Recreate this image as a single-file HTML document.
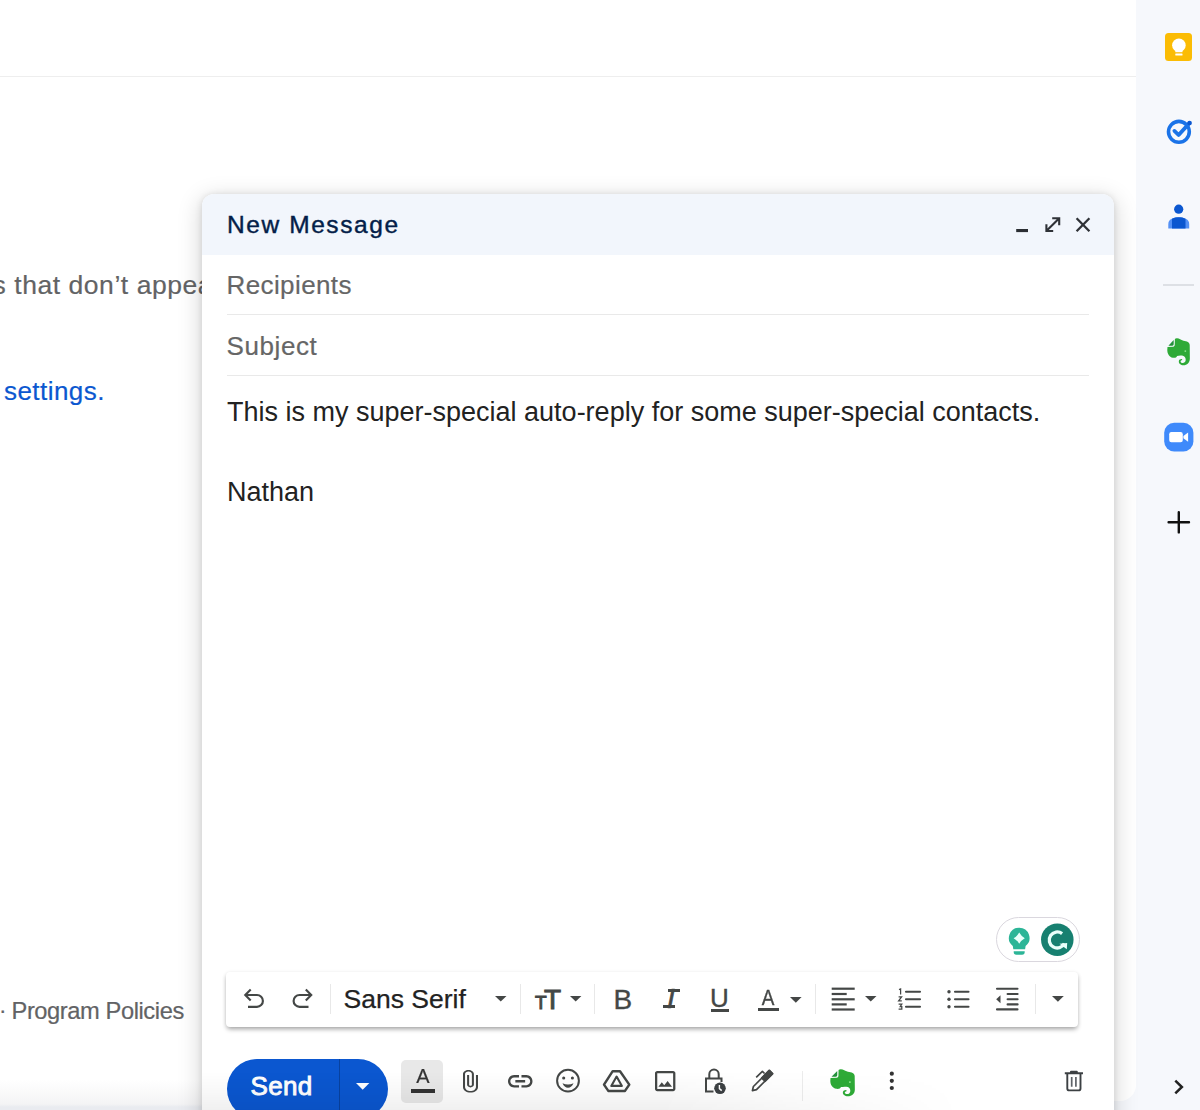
<!DOCTYPE html>
<html><head><meta charset="utf-8">
<title>New Message</title>
<style>
*{box-sizing:border-box;margin:0;padding:0}
html,body{width:1200px;height:1110px;overflow:hidden;background:#f6f8fc;font-family:"Liberation Sans",sans-serif;}
.abs{position:absolute}
svg{display:block;overflow:visible}
#main{left:0;top:0;width:1136px;height:1110px;background:linear-gradient(#fff 0,#fff 1080px,#f4f4f5 1104px,#e9ebf0 1107px,#e9ebf0 1110px)}
#main2{left:1100px;top:0;width:36px;height:1101px;background:#fff;border-radius:0 0 16px 0}
#main3{left:1100px;top:1080px;width:36px;height:30px;background:#f6f8fc}
#topline{left:0;top:75.600px;width:1136px;height:1.500px;background:#eee}
.bgt{-webkit-text-stroke:.2px;color:#626365;font-size:26px;line-height:30px;white-space:nowrap}
#compose{left:202px;top:194px;width:911.500px;height:930px;background:#fff;border-radius:12px 12px 0 0;box-shadow:0 6px 22px 4px rgba(0,0,0,.13),0 1px 7px rgba(0,0,0,.13);overflow:hidden}
#chead{left:0;top:0;width:912px;height:61px;background:#f2f6fc}
#title{left:227px;top:209.700px;font-size:24.5px;line-height:30px;font-weight:normal;-webkit-text-stroke:.42px #041e49;color:#041e49;white-space:nowrap;letter-spacing:1.580px}
.fld{left:226.500px;font-size:26px;line-height:30px;color:#666;-webkit-text-stroke:.2px #666;white-space:nowrap}
.hr{left:227px;width:862px;height:1px;background:#e9e9e9}
.body{left:227px;font-size:27px;line-height:32px;color:#222;white-space:nowrap}
#fmt{left:226px;top:972px;width:852px;height:55px;background:#fff;border-radius:4px;box-shadow:0 3px 5px -1px rgba(0,0,0,.32),0 1px 4px rgba(0,0,0,.1)}
.sep{width:1px;background:#e8e8e8;top:984px;height:30px}
#fontname{left:343.500px;top:983.800px;font-size:26.500px;line-height:30px;color:#222;white-space:nowrap;letter-spacing:0;-webkit-text-stroke:.25px #222}
#send{left:227px;top:1058.500px;width:161px;height:60px;border-radius:30px;background:#0b57d0}
#sendt{left:250.500px;top:1070.500px;color:#fff;font-size:26px;line-height:30px;font-weight:normal;-webkit-text-stroke:.9px #fff;letter-spacing:.3px}
#senddiv{left:339px;top:1059px;width:1px;height:60px;background:#0842a0}
#abtn{left:401px;top:1060px;width:42px;height:42.500px;border-radius:5px;background:#e8e8e8}
.tg{color:#444746;-webkit-text-stroke:.35px #444746;white-space:nowrap}
#gpill{left:996px;top:917px;width:84px;height:45px;border-radius:23px;background:#fff;border:1.500px solid #dad7de}
</style></head><body>
<div class="abs" id="main"></div>
<div class="abs" id="main3"></div>
<div class="abs" id="main2"></div>
<div class="abs" id="topline"></div>
<div class="abs bgt" style="left:-7.500px;top:270px;font-size:26.5px;letter-spacing:.55px">s that don’t appear</div>
<div class="abs bgt" style="left:4px;top:376px;color:#0b57d0;letter-spacing:.45px">settings.</div>
<div class="abs bgt" style="left:-1px;top:996px;font-size:22.5px">·</div><div class="abs bgt" style="left:11.500px;top:996px;font-size:23.700px;letter-spacing:-.42px">Program Policies</div>

<div class="abs" id="compose"><div class="abs" id="chead"></div></div>
<div class="abs" id="title">New Message</div>
<div class="abs fld" style="top:270px;letter-spacing:.4px">Recipients</div>
<div class="abs hr" style="top:314px"></div>
<div class="abs fld" style="top:331px;letter-spacing:.6px">Subject</div>
<div class="abs hr" style="top:375px"></div>
<div class="abs body" style="top:396px">This is my super-special auto-reply for some super-special contacts.</div>
<div class="abs body" style="top:476px">Nathan</div>

<div class="abs" id="gpill"></div>
<div class="abs" id="fmt"></div>
<div class="abs sep" style="left:330px"></div>
<div class="abs sep" style="left:520px"></div>
<div class="abs sep" style="left:594px"></div>
<div class="abs sep" style="left:815px"></div>
<div class="abs sep" style="left:1035px"></div>
<div class="abs" id="fontname">Sans Serif</div>

<div class="abs" id="send"></div>
<div class="abs" id="senddiv"></div>
<div class="abs" id="sendt">Send</div>
<svg class="abs" style="left:356.3px;top:1082.5px" width="13.4" height="6.7" viewBox="0 0 10 5" fill="#fff"><path d="M0 0h10L5 5z"/></svg>
<div class="abs" id="abtn"></div>
<div class="abs" style="left:802px;top:1071px;width:1px;height:30px;background:#ececec"></div>
<svg class="abs" style="left:495.00px;top:996.40px" width="11.50" height="5.60" viewBox="7.000 10.000 10.000 5.000" preserveAspectRatio="none" fill="#444746"><path d="M7 10l5 5 5-5z"/></svg>
<svg class="abs" style="left:570.30px;top:996.40px" width="11.40" height="5.60" viewBox="7.000 10.000 10.000 5.000" preserveAspectRatio="none" fill="#444746"><path d="M7 10l5 5 5-5z"/></svg>
<svg class="abs" style="left:790.20px;top:996.50px" width="11.60" height="5.70" viewBox="7.000 10.000 10.000 5.000" preserveAspectRatio="none" fill="#444746"><path d="M7 10l5 5 5-5z"/></svg>
<svg class="abs" style="left:864.50px;top:996.40px" width="11.50" height="5.60" viewBox="7.000 10.000 10.000 5.000" preserveAspectRatio="none" fill="#444746"><path d="M7 10l5 5 5-5z"/></svg>
<svg class="abs" style="left:1051.50px;top:996.40px" width="11.80" height="5.80" viewBox="7.000 10.000 10.000 5.000" preserveAspectRatio="none" fill="#444746"><path d="M7 10l5 5 5-5z"/></svg>
<svg class="abs" style="left:462.50px;top:1070.00px" width="15.00" height="22.50" viewBox="7.000 1.000 11.000 22.000" preserveAspectRatio="none" fill="#444746"><path d="M16.500 6v11.500c0 2.210-1.790 4-4 4s-4-1.790-4-4V5c0-1.380 1.120-2.500 2.500-2.500s2.500 1.120 2.500 2.500v10.500c0 .550-.450 1-1 1s-1-.450-1-1V6H10v9.500c0 1.380 1.120 2.500 2.500 2.500s2.500-1.120 2.500-2.500V5c0-2.210-1.790-4-4-4S7 2.790 7 5v12.500c0 3.040 2.460 5.500 5.500 5.500s5.500-2.460 5.500-5.500V6h-1.500z"/></svg>
<svg class="abs" style="left:507.50px;top:1075.00px" width="24.50" height="12.50" viewBox="2.000 7.000 20.000 10.000" preserveAspectRatio="none" fill="#444746"><path d="M3.900 12c0-1.710 1.390-3.100 3.100-3.100h4V7H7c-2.760 0-5 2.240-5 5s2.240 5 5 5h4v-1.900H7c-1.710 0-3.100-1.390-3.100-3.100zM8 13h8v-2H8v2zm9-6h-4v1.900h4c1.710 0 3.100 1.390 3.100 3.100s-1.390 3.100-3.100 3.100h-4V17h4c2.760 0 5-2.240 5-5s-2.240-5-5-5z"/></svg>
<svg class="abs" style="left:655.20px;top:1071.00px" width="20.40" height="20.20" viewBox="3.000 3.000 18.000 18.000" preserveAspectRatio="none" fill="#444746"><path d="M19 5v14H5V5h14m0-2H5c-1.100 0-2 .900-2 2v14c0 1.100.900 2 2 2h14c1.100 0 2-.900 2-2V5c0-1.100-.900-2-2-2zm-4.860 8.860l-3 3.870L9 13.140 6 17h12l-3.860-5.140z"/></svg>
<!-- header buttons -->
<svg class="abs" style="left:1010px;top:210px" width="90" height="30" viewBox="1010 210 90 30" fill="none" stroke="#2f3237" stroke-width="2.100">
<rect x="1016.2" y="229" width="11.8" height="3.1" fill="#2b2e33" stroke="none"/>
<path d="M1046.6 230.7L1059 218.4M1052.2 218.3h7v7M1046.4 224.2v6.8h6.8"/>
<path d="M1076.6 218.3l12.8 13M1089.4 218.3l-12.8 13" stroke-width="2.300" stroke="#2f3237"/>
</svg>
<!-- A button glyph -->
<div class="abs tg" id="g_A2" style="left:415.700px;top:1062.600px;font-size:21px;line-height:26px;transform:scaleX(.95);color:#333;-webkit-text-stroke:.2px #333">A</div>
<div class="abs" style="left:410.5px;top:1088.7px;width:24px;height:4.3px;background:#333"></div>
<!-- drive -->
<svg class="abs" style="left:600px;top:1066px" width="34" height="30" viewBox="600 1066 34 30" fill="none" stroke="#444746" stroke-width="2.450" stroke-linejoin="round">
<path d="M612.700 1071.200h7.300l9.300 13.400-4.300 6.300h-16.700l-4.300-6.300z"/>
<path d="M616.600 1076.600l5.300 9.300h-10.600z" stroke-width="2.100"/>
</svg>
<!-- lock clock -->
<svg class="abs" style="left:700px;top:1064px" width="32" height="34" viewBox="700 1064 32 34" fill="none" stroke="#444746" stroke-width="2">
<path d="M713.5 1091.500H706v-13h15.500v3.500"/>
<path d="M709.300 1078.500v-4.300a4.700 4.700 0 0 1 9.400 0v4.300"/>
<circle cx="720" cy="1088.300" r="5.800" fill="#3c4043" stroke="none"/>
<path d="M719.400 1085v3.600l2.300 2" stroke="#fff" stroke-width="1.400"/>
</svg>
<!-- pen -->
<svg class="abs" style="left:748px;top:1066px" width="30" height="30" viewBox="748 1066 30 30" fill="none" stroke="#444746" stroke-width="1.700" stroke-linejoin="round">
<path d="M752.400 1090.600l1-4.100 15.900-15.900 3.100 3.100-15.900 15.900z"/>
<path d="M762 1078l7.300-7.400 3.100 3.100-7.300 7.400z" fill="#444746" stroke-width="2.100"/>
<path d="M756.200 1077.400l6.200-6 2.200 2.100"/>
</svg>
<!-- more dots -->
<svg class="abs" style="left:886px;top:1068px" width="12" height="26" viewBox="886 1068 12 26" fill="#333"><circle cx="891.800" cy="1073.700" r="2.100"/><circle cx="891.800" cy="1080.800" r="2.100"/><circle cx="891.800" cy="1088" r="2.100"/></svg>
<!-- evernote bottom -->
<svg class="abs" style="left:830px;top:1068.700px" width="25" height="27.500" viewBox="368 253 324 384" preserveAspectRatio="none"><path fill="#2eaa37" d="M505 258C540 255 560 285 600 290C650 295 685 310 688 350L690 540C690 600 650 635 600 635C560 635 530 610 535 575C538 555 560 545 582 548L580 566C566 565 558 575 560 585C565 605 600 610 620 590C640 570 635 520 600 505C570 495 530 500 510 505C505 525 480 535 450 530C400 520 372 470 372 420L375 378L455 374C470 373 477 362 477 347L479 268C485 260 495 258 505 258Z"/><path fill="#23913a" d="M388 360L462 280L462 338C462 352 455 360 443 360Z"/><circle cx="626" cy="436" r="13" fill="#8fe38f"/></svg>
<!-- side panel -->

<!-- keep -->
<div class="abs" style="left:1164.500px;top:32.700px;width:27.800px;height:28.500px;border-radius:3.500px;background:#fbbc04"></div>
<svg class="abs" style="left:1164px;top:32px" width="30" height="30" viewBox="1164 32 30 30" fill="#fff"><circle cx="1178.900" cy="45.200" r="6.800"/><rect x="1175.300" y="49" width="7.200" height="3.200"/><rect x="1175.300" y="53.400" width="7.200" height="2.200" rx=".5"/></svg>
<!-- tasks -->
<svg class="abs" style="left:1162px;top:115px" width="34" height="34" viewBox="1162 115 34 34" fill="none" stroke="#1a73e8" stroke-linecap="round" stroke-linejoin="round">
<circle cx="1178.900" cy="131.800" r="10.400" stroke-width="3.600"/>
<path d="M1174.400 130.900l4.200 4.100 10.600-11.600" stroke-width="3.800"/>
<circle cx="1189.600" cy="123" r="2.300" fill="#0b57d0" stroke="none"/>
</svg>
<!-- contacts -->
<svg class="abs" style="left:1164px;top:200px" width="30" height="32" viewBox="1164 200 30 32">
<circle cx="1178.700" cy="209.200" r="4.600" fill="#0b57d0"/>
<path d="M1168.300 228.600V224C1168.300 219.500 1173 217.300 1178.700 217.300C1184.500 217.300 1189.200 219.500 1189.200 224V228.600Z" fill="#5491f5"/>
<path d="M1172 228.600V218.700Q1175 217.300 1178.700 217.300Q1182.500 217.300 1185.500 218.700V228.600Z" fill="#0b57d0"/>
</svg>
<div class="abs" style="left:1163px;top:284px;width:30.500px;height:1.500px;background:#dde0e5"></div>
<!-- evernote side -->
<svg class="abs" style="left:1166.700px;top:338.400px" width="23" height="27.400" viewBox="368 253 324 384" preserveAspectRatio="none"><path fill="#2eaa37" d="M505 258C540 255 560 285 600 290C650 295 685 310 688 350L690 540C690 600 650 635 600 635C560 635 530 610 535 575C538 555 560 545 582 548L580 566C566 565 558 575 560 585C565 605 600 610 620 590C640 570 635 520 600 505C570 495 530 500 510 505C505 525 480 535 450 530C400 520 372 470 372 420L375 378L455 374C470 373 477 362 477 347L479 268C485 260 495 258 505 258Z"/><path fill="#23913a" d="M388 360L462 280L462 338C462 352 455 360 443 360Z"/><circle cx="626" cy="436" r="13" fill="#8fe38f"/></svg>
<!-- zoom -->
<svg class="abs" style="left:1162px;top:420px" width="34" height="34" viewBox="1162 420 34 34">
<rect x="1164.200" y="422.700" width="29.200" height="28.800" rx="10" fill="#3f8afb"/>
<rect x="1169.200" y="432" width="13.600" height="10.200" rx="2.200" fill="#fff"/>
<path d="M1183.400 436l4.700-3.600v9.400l-4.700-3.600z" fill="#fff"/>
</svg>
<!-- plus -->
<svg class="abs" style="left:1164px;top:508px" width="30" height="30" viewBox="1164 508 30 30" stroke="#111" stroke-width="2.400" stroke-linecap="round"><path d="M1168.600 522.300h20.400M1178.800 512.200v20.200"/></svg>
<!-- chevron -->
<svg class="abs" style="left:1170px;top:1076px" width="18" height="22" viewBox="1170 1076 18 22" fill="none" stroke="#222" stroke-width="2.500"><path d="M1175.300 1080.600l6.600 6.400-6.600 6.400"/></svg>
<!-- grammarly -->
<svg class="abs" style="left:1000px;top:920px" width="80" height="40" viewBox="1000 920 80 40">
<path fill="#2cb597" d="M1019.200 927.700a10.200 10.200 0 0 1 6.400 18.200l-.5 3.300h-11.800l-.5-3.300a10.200 10.200 0 0 1 6.400-18.200z"/>
<path fill="#2cb597" d="M1013.700 951.200h11v.9a2.600 2.600 0 0 1-2.600 2.600h-5.800a2.600 2.600 0 0 1-2.600-2.600z"/>
<path fill="#e9fffa" d="M1019.200 932.600q2 3.600 5.600 5.600q-3.600 2-5.600 5.600q-2-3.600-5.600-5.600q3.600-2 5.600-5.600z"/>
<circle cx="1057.300" cy="939.700" r="16.250" fill="#178070"/>
<path d="M1062.100 933.600A8 8 0 1 0 1064.400 943.600" fill="none" stroke="#e9fffa" stroke-width="3.300"/>
<path d="M1059.500 943.800l7.700-.8-.4 6.200z" fill="#e9fffa"/>
</svg>
<!-- toolbar glyphs as real text -->
<div class="abs tg" id="g_t" style="left:535px;top:991px;font-size:19px;line-height:24px;-webkit-text-stroke:1px #444746">T</div>
<div class="abs tg" id="g_T" style="left:544px;top:982.700px;font-size:28px;line-height:34px;-webkit-text-stroke:.95px #444746">T</div>
<div class="abs tg" id="g_B" style="left:613.500px;top:982.500px;font-size:28px;line-height:34px">B</div>
<div class="abs tg" id="g_I" style="left:667px;top:982px;font-size:28px;line-height:34px;font-style:italic;-webkit-text-stroke:.6px #444746">I</div>
<div class="abs" style="left:668.300px;top:989.100px;width:12px;height:3.100px;background:#444746"></div>
<div class="abs" style="left:663px;top:1005.300px;width:12px;height:3.100px;background:#444746"></div>
<div class="abs tg" id="g_U" style="left:710px;top:981px;font-size:26px;line-height:34px">U</div>
<div class="abs" style="left:711.300px;top:1009.400px;width:17.400px;height:2.500px;background:#444746"></div>
<div class="abs tg" id="g_A" style="left:761px;top:982.700px;font-size:21.500px;line-height:30px;transform:scaleX(.88)">A</div>
<div class="abs" style="left:758.300px;top:1008.400px;width:20.400px;height:2.500px;background:#444746"></div>
<svg class="abs" style="left:826px;top:984px" width="34" height="30" viewBox="826 984 34 30" fill="#444746">
<rect x="831.700" y="987.600" width="23" height="2.200"/><rect x="831.700" y="992.900" width="15" height="2.200"/><rect x="831.700" y="998.200" width="23" height="2.200"/><rect x="831.700" y="1003.300" width="15" height="2.200"/><rect x="831.700" y="1008.400" width="23" height="2.200"/>
</svg>
<svg class="abs" style="left:890px;top:980px" width="140" height="40" viewBox="890 980 140 40" fill="none" stroke="#444746" stroke-width="2.100" stroke-linecap="round">
<path d="M906 991.700h14M906 999.300h14M906 1006.700h14"/>
<path d="M899 989.600l1.600-.6v5.600M898.600 996.800h3l-3 4h3.200M898.600 1004h3.200l-1.600 2.600h1.600v2.600h-3.200" stroke-width="1.250" stroke-linecap="butt" stroke-linejoin="miter"/>
<path d="M955 991.700h13.500M955 999.300h13.500M955 1006.700h13.500"/>
<g fill="#444746" stroke="none"><circle cx="949" cy="991.700" r="1.700"/><circle cx="949" cy="999.300" r="1.700"/><circle cx="949" cy="1006.700" r="1.700"/>
<path d="M996.200 999.300l4.300-4v8z"/></g>
<path d="M997 988.800h20.500M997 1009.400h20.500M1007.600 994h10M1007.600 999.200h10M1007.600 1004.400h10"/>
</svg>

<svg class="abs" style="left:552px;top:1064px" width="32" height="32" viewBox="552 1064 32 32" fill="none" stroke="#444746" stroke-width="2.200">
<circle cx="568" cy="1080.700" r="10.900" stroke-width="2"/>
<g fill="#444746" stroke="none"><circle cx="563.700" cy="1078" r="1.550"/><circle cx="572.400" cy="1078" r="1.550"/><path d="M562.500 1083.300Q568 1085.700 573.500 1083.300Q571.600 1087.700 568 1087.700Q564.400 1087.700 562.500 1083.300Z"/></g>
</svg>
<div class="abs" style="left:202px;top:1072px;width:760px;height:38px;background:linear-gradient(to bottom,rgba(0,0,0,0),rgba(0,0,0,.025) 45%,rgba(0,0,0,.06));-webkit-mask-image:linear-gradient(to right,#000 0,#000 60%,transparent 100%);mask-image:linear-gradient(to right,#000 0,#000 60%,transparent 100%)"></div>

<svg class="abs" style="left:240px;top:984px" width="80" height="30" viewBox="240 984 80 30" fill="none" stroke="#444746" stroke-width="2.150">
<path d="M250.700 989.600L245.300 995l5.400 5.400M245.800 995H257a5.900 5.900 0 0 1 0 11.800h-9"/>
<path d="M305.800 989.600l5.400 5.400-5.400 5.400M310.700 995h-11.200a5.900 5.900 0 0 0 0 11.800h9"/>
</svg>

<svg class="abs" style="left:1060px;top:1066px" width="28" height="30" viewBox="1060 1066 28 30" fill="none" stroke="#3c4043" stroke-width="1.900" stroke-linejoin="round">
<path d="M1064.800 1073.300h18.200M1071 1073v-1.400h5.800v1.400"/>
<path d="M1067.300 1073.600v14.800a2 2 0 0 0 2 2h9.200a2 2 0 0 0 2-2v-14.800"/>
<path d="M1071.700 1077v9.700M1075.900 1077v9.700" stroke="#5f6368" stroke-width="1.700"/>
</svg>

</body></html>
